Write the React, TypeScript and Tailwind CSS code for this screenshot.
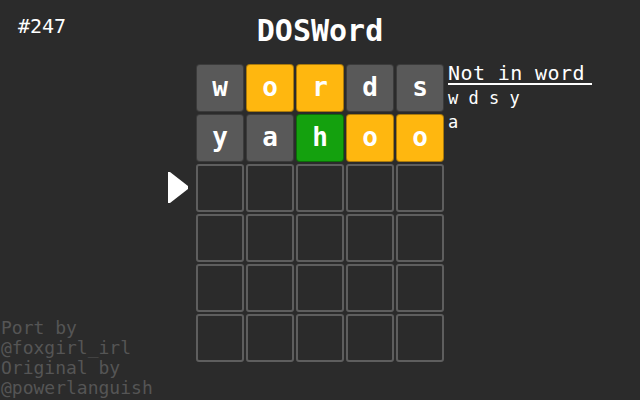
import React from "react";

type Tile = { ch: string; state: "absent" | "present" | "correct" };

const guesses: Tile[][] = [
  [
    { ch: "w", state: "absent" },
    { ch: "o", state: "present" },
    { ch: "r", state: "present" },
    { ch: "d", state: "absent" },
    { ch: "s", state: "absent" },
  ],
  [
    { ch: "y", state: "absent" },
    { ch: "a", state: "absent" },
    { ch: "h", state: "correct" },
    { ch: "o", state: "present" },
    { ch: "o", state: "present" },
  ],
];

const tileColor = {
  absent: "bg-[#595959]",
  present: "bg-[#ffb70f]",
  correct: "bg-[#14a10e]",
};

const mono = "font-['DejaVu_Sans_Mono',monospace]";

export default function App() {
  const rows = Array.from({ length: 6 }, (_, r) => guesses[r] ?? null);

  return (
    <div className={`w-[640px] h-[400px] bg-[#2b2b2b] text-white overflow-hidden ${mono}`}>
      {/* Header */}
      <div className="grid grid-cols-[196px_248px_196px] h-[64px]">
        <div className="pl-[18px] pt-[14px] text-[20px] leading-[24px]">#247</div>
        <div className="text-center pt-[14px] text-[30px] leading-[34px] font-bold">DOSWord</div>
        <div />
      </div>

      {/* Board */}
      <div className="grid grid-cols-[196px_248px_196px] h-[336px]">
        <div className="flex flex-col">
          <div className="flex justify-end pr-[8px] mt-[108px]">
            <svg width="20" height="31" viewBox="0 0 20 31">
              <polygon points="0,0 2,0 20,14 20,17 2,31 0,31" fill="#ffffff" />
            </svg>
          </div>
          <div className="mt-auto mb-[2px] pl-[1px] text-[18px] leading-[20px] text-[#555555]">
            <div>Port by</div>
            <div>@foxgirl_irl</div>
            <div>Original by</div>
            <div>@powerlanguish</div>
          </div>
        </div>

        <div className="flex flex-col gap-[2px]">
          {rows.map((row, r) => (
            <div key={r} className="flex gap-[2px]">
              {Array.from({ length: 5 }, (_, c) => {
                const t = row?.[c];
                if (!t) {
                  return (
                    <div
                      key={c}
                      className="w-[48px] h-[48px] rounded-[3px] border-2 border-[#5e5e5e]"
                    />
                  );
                }
                return (
                  <div
                    key={c}
                    className={`w-[48px] h-[48px] rounded-[4px] border border-[#00000055] flex items-center justify-center text-[26px] font-bold leading-none pb-[2px] ${tileColor[t.state]}`}
                  >
                    {t.ch}
                  </div>
                );
              })}
            </div>
          ))}
        </div>

        <div className="pl-[4px]">
          <div className="w-[144px] border-b-2 border-white text-[20px] leading-[19px] tracking-[0.4px]">Not in word</div>
          <div className="text-[17px] leading-[24px] mt-[1px]">w d s y</div>
          <div className="text-[17px] leading-[24px]">a</div>
        </div>
      </div>
    </div>
  );
}
